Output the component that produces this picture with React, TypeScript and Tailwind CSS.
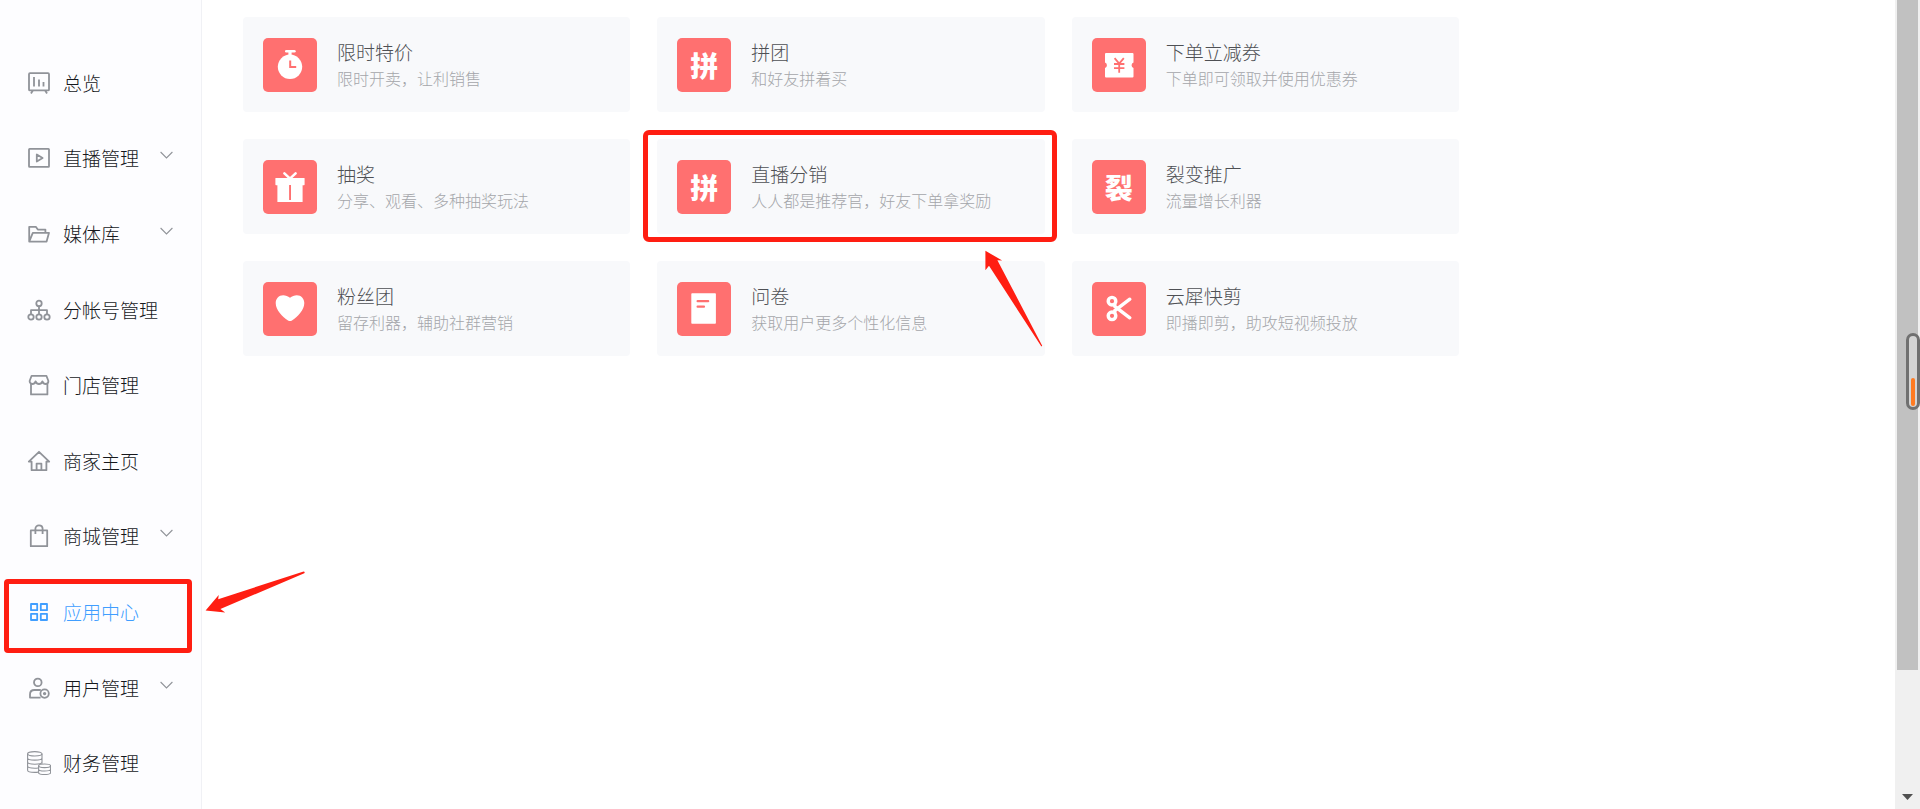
import type { ReactNode } from "react";

type NavItem = {
  label: string;
  icon: ReactNode;
  expandable?: boolean;
  active?: boolean;
};

type AppCard = {
  title: string;
  description: string;
  icon: ReactNode;
  highlighted?: boolean;
};

function LineIcon({ children, thin = false }: { children: ReactNode; thin?: boolean }) {
  return (
    <svg
      viewBox="0 0 24 24"
      className="size-6 shrink-0"
      fill="none"
      stroke="currentColor"
      strokeWidth={thin ? 1.1 : 1.8}
      strokeLinejoin="round"
      aria-hidden="true"
    >
      {children}
    </svg>
  );
}

const navItems: NavItem[] = [
  {
    label: "总览",
    icon: (
      <LineIcon>
        <rect x="2" y="2.2" width="20" height="17.2" rx="1" />
        <path d="M7 6v9.500M12 8.500v7M16.500 11v4.500M5.800 19.500l-1.800 3M18.200 19.500l1.800 3" />
      </LineIcon>
    ),
  },
  {
    label: "直播管理",
    expandable: true,
    icon: (
      <LineIcon>
        <rect x="2" y="2.8" width="20" height="18" rx="0.6" />
        <path d="M9.800 8.400v7.200l5.800-3.600z" />
      </LineIcon>
    ),
  },
  {
    label: "媒体库",
    expandable: true,
    icon: (
      <LineIcon>
        <path d="M2.200 19.600V4.800h6.600l2 2.800h7.600v3.200M2.200 19.600l3.600-8.800H22l-2.400 8.800z" />
      </LineIcon>
    ),
  },
  {
    label: "分帐号管理",
    icon: (
      <LineIcon>
        <circle cx="12" cy="5.4" r="2.7" />
        <circle cx="4" cy="19" r="2.7" />
        <circle cx="12" cy="19" r="2.7" />
        <circle cx="20" cy="19" r="2.7" />
        <path d="M12 8.100v8.200M4 16.300v-4.100h16v4.100" />
      </LineIcon>
    ),
  },
  {
    label: "门店管理",
    icon: (
      <LineIcon>
        <path d="M4.600 2.800h14.800l2 5.200c0 1.800-1.200 3-2.800 3s-2.600-1-3.200-2.600C14.800 10 13.600 11 12 11s-2.800-1-3.400-2.600C8 10 7 11 5.400 11S2.600 9.800 2.600 8z" />
        <path d="M4 11v10.400h16.400V11" />
      </LineIcon>
    ),
  },
  {
    label: "商家主页",
    icon: (
      <LineIcon>
        <path d="M1.800 12.600 12 2.800l10.200 9.800h-2.800v8.600H4.600v-8.600z" />
        <path d="M9.600 21v-6.400h4.800V21" />
      </LineIcon>
    ),
  },
  {
    label: "商城管理",
    expandable: true,
    icon: (
      <LineIcon>
        <path d="M3.800 6.400h16.400v15.800H3.800zM8.400 10V4.800c0-2 1.500-3.400 3.600-3.400s3.600 1.400 3.600 3.400V10" />
      </LineIcon>
    ),
  },
  {
    label: "应用中心",
    active: true,
    icon: (
      <LineIcon>
        <path d="M4 4h6.200v6.200H4zM13.800 4H20v6.200h-6.200zM4 13.800h6.200V20H4zM13.800 13.800H20V20h-6.200z" />
      </LineIcon>
    ),
  },
  {
    label: "用户管理",
    expandable: true,
    icon: (
      <LineIcon>
        <circle cx="10.8" cy="6.4" r="3.8" />
        <path d="M13.600 21.600H3v-3.200c0-2.600 1.800-4.400 4.400-4.400h6.400" />
        <circle cx="17.6" cy="17.6" r="4.2" />
        <circle cx="17.6" cy="17.6" r="0.8" />
      </LineIcon>
    ),
  },
  {
    label: "财务管理",
    icon: (
      <LineIcon thin>
        <ellipse cx="7.8" cy="2.8" rx="7.2" ry="2.2" />
        <path d="M.6 2.800v16.400c0 1.200 3.200 2.200 7.200 2.200 1.200 0 2.300-.1 3.200-.3M15 2.800v10M.6 6.900c0 1.200 3.200 2.200 7.200 2.200S15 8.100 15 6.900M.6 11c0 1.200 3.200 2.200 7.200 2.200S15 12.200 15 11M.6 15.100c0 1.200 3.200 2.200 7.200 2.200 1.200 0 2.300-.1 3.200-.3" />
        <ellipse cx="17.6" cy="14.8" rx="6" ry="1.8" />
        <path d="M11.600 14.800v6.900c0 1 2.700 1.800 6 1.800s6-.8 6-1.800v-6.900M11.600 18.200c0 1 2.700 1.800 6 1.800s6-.8 6-1.800" />
      </LineIcon>
    ),
  },
];

function TileIcon({ children }: { children: ReactNode }) {
  return (
    <svg viewBox="0 0 54 54" className="size-full" fill="#fff" aria-hidden="true">
      {children}
    </svg>
  );
}

function TileGlyph({ children }: { children: string }) {
  return <span className="text-[28px] leading-none font-black text-white">{children}</span>;
}

const appCards: AppCard[] = [
  {
    title: "限时特价",
    description: "限时开卖，让利销售",
    icon: (
      <TileIcon>
        <rect x="22" y="12" width="10.7" height="2.6" rx="1.3" />
        <path d="M25.400 14h3.200v4h-3.200z" />
        <circle cx="27" cy="28.8" r="12.2" />
        <path d="M27.200 22.600V29h6" fill="none" stroke="#ff7070" strokeWidth="2" />
      </TileIcon>
    ),
  },
  { title: "拼团", description: "和好友拼着买", icon: <TileGlyph>拼</TileGlyph> },
  {
    title: "下单立减券",
    description: "下单即可领取并使用优惠券",
    icon: (
      <TileIcon>
        <path d="M14 15h26.500a1 1 0 0 1 1 1v8.400a3 3 0 0 0 0 5.600v8.400a1 1 0 0 1-1 1H14a1 1 0 0 1-1-1V30a3 3 0 0 0 0-5.600V16a1 1 0 0 1 1-1z" />
        <path
          d="M22.600 20.200l4.600 5.400 4.600-5.400M27.200 25.600v9.200M22 26h10.400M22 30.200h10.400"
          fill="none"
          stroke="#ff7070"
          strokeWidth="1.8"
        />
      </TileIcon>
    ),
  },
  {
    title: "抽奖",
    description: "分享、观看、多种抽奖玩法",
    icon: (
      <TileIcon>
        <path d="M21.400 13.400 27 18.600l5.600-5.200" fill="none" stroke="#fff" strokeWidth="2.6" strokeLinecap="round" />
        <rect x="12.4" y="18" width="29.2" height="7.2" rx="0.6" />
        <path d="M14.400 25h25.200v17H14.400z" />
        <path d="M26.100 25H28v15h-1.900z" fill="#ff7070" />
      </TileIcon>
    ),
  },
  {
    title: "直播分销",
    description: "人人都是推荐官，好友下单拿奖励",
    highlighted: true,
    icon: <TileGlyph>拼</TileGlyph>,
  },
  { title: "裂变推广", description: "流量增长利器", icon: <TileGlyph>裂</TileGlyph> },
  {
    title: "粉丝团",
    description: "留存利器，辅助社群营销",
    icon: (
      <TileIcon>
        <path d="M27 15.800c2-1.800 4.400-2.600 6.800-2.600 4.400 0 7.500 3.400 7.500 7.800 0 7.400-6.800 13.800-12.300 17.400-1.400.9-2.600.9-4 0-5.500-3.600-12.300-10-12.300-17.400 0-4.400 3.100-7.800 7.500-7.800 2.400 0 4.800.8 6.800 2.600z" />
      </TileIcon>
    ),
  },
  {
    title: "问卷",
    description: "获取用户更多个性化信息",
    icon: (
      <TileIcon>
        <rect x="14.3" y="11.2" width="24.6" height="30.6" rx="0.8" />
        <path d="M20.600 19.200h10.600M20.600 24.700h6.400" fill="none" stroke="#ff7070" strokeWidth="2.2" strokeLinecap="round" />
      </TileIcon>
    ),
  },
  {
    title: "云犀快剪",
    description: "即播即剪，助攻短视频投放",
    icon: (
      <TileIcon>
        <g fill="none" stroke="#fff" strokeWidth="3.4" strokeLinecap="round">
          <circle cx="20" cy="19.2" r="3.8" />
          <circle cx="20" cy="33.8" r="3.8" />
          <path d="M37.800 17.200 22.800 28.600v2M37.800 35.800 22.800 24.400v-2" />
        </g>
      </TileIcon>
    ),
  },
];

function NavRow({ item }: { item: NavItem }) {
  return (
    <li className="relative flex flex-1">
      <button
        type="button"
        className={`flex w-full cursor-pointer items-center pr-7 pl-[27px] text-left ${
          item.active ? "text-[#409eff]" : "text-[#909399]"
        }`}
      >
        {item.icon}
        <span className={`ml-3 text-[19px] leading-7 ${item.active ? "" : "text-[#16181c]"}`}>{item.label}</span>
        {item.expandable && (
          <svg
            viewBox="0 0 13 8"
            className="mb-1.5 ml-auto h-2 w-[13px]"
            fill="none"
            stroke="currentColor"
            strokeWidth="1.1"
            aria-hidden="true"
          >
            <path d="M.6 1 6.500 7l5.900-6" />
          </svg>
        )}
      </button>
      {item.active && (
        <>
          <span className="pointer-events-none absolute top-[5px] right-[9px] -bottom-[3px] left-1 rounded border-[5px] border-[#ff1e12]" />
          <svg
            viewBox="0 0 100 42"
            className="pointer-events-none absolute -top-[3px] left-[205px] z-10 h-[42px] w-[100px]"
            fill="#ff1e12"
            aria-hidden="true"
          >
            <path d="M.6 39.600 13.700 24l-.5 4.300L98.600.4l1.200.5-.5 1.300L15.400 38l4.800 3.600z" />
          </svg>
        </>
      )}
    </li>
  );
}

function Card({ card }: { card: AppCard }) {
  return (
    <li className="relative">
      <a href="#" className="flex h-[95px] items-center gap-5 rounded bg-[#f8f9fb] px-5">
        <span className="flex size-[54px] shrink-0 items-center justify-center rounded-[5px] bg-[#ff7070]">
          {card.icon}
        </span>
        <span className="flex flex-col pb-0.5">
          <span className="text-[19px] leading-7 text-[#4e5054]">{card.title}</span>
          <span className="text-base leading-6 text-[#a4a6aa]">{card.description}</span>
        </span>
      </a>
      {card.highlighted && (
        <>
          <span className="pointer-events-none absolute -top-[9px] -right-3 -bottom-2 -left-[14px] rounded-md border-[5px] border-[#ff1e12]" />
          <svg
            viewBox="0 0 58 97"
            className="pointer-events-none absolute top-[111px] right-[2px] z-10 h-[97px] w-[58px]"
            fill="#ff1e12"
            aria-hidden="true"
          >
            <path d="M.4.700 17.200 10.600l-4.800-.4L57.200 95.800l-.8.700L4 15.800.4 20.200z" />
          </svg>
        </>
      )}
    </li>
  );
}

function ScrollRail() {
  return (
    <div className="sticky top-0 flex h-screen w-[25px] shrink-0 flex-col items-center justify-between bg-[#f0f0f0] pb-[9px]">
      <span className="h-[670px] max-h-11/12 w-[21px] bg-[#c1c1c1]" />
      <svg viewBox="0 0 11 6" className="h-[6px] w-[11px]" fill="#505050" aria-hidden="true">
        <path d="M0 0h11L5.500 6z" />
      </svg>
      <span className="absolute top-[333px] right-0 flex h-[77px] w-[14px] items-end justify-center rounded-full border-[3px] border-[#707070] bg-[#d4d4d4] pb-px">
        <span className="h-7 w-1 rounded-full bg-[#ff7b22]" />
      </span>
    </div>
  );
}

export default function App() {
  return (
    <div className="flex min-h-screen bg-white font-['Noto_Sans_CJK_SC',sans-serif] font-light">
      <nav
        aria-label="主导航"
        className="flex w-[202px] shrink-0 flex-col border-r border-[#f0f1f5] bg-[#fdfdff] pt-[45px] pb-2"
      >
        <ul className="flex flex-1 flex-col">
          {navItems.map((item) => (
            <NavRow key={item.label} item={item} />
          ))}
        </ul>
      </nav>
      <main className="min-w-0 flex-1 px-[41px] pt-[17px]">
        <ul className="grid max-w-[1216px] grid-cols-3 gap-[27px]">
          {appCards.map((card) => (
            <Card key={card.title} card={card} />
          ))}
        </ul>
      </main>
      <ScrollRail />
    </div>
  );
}
